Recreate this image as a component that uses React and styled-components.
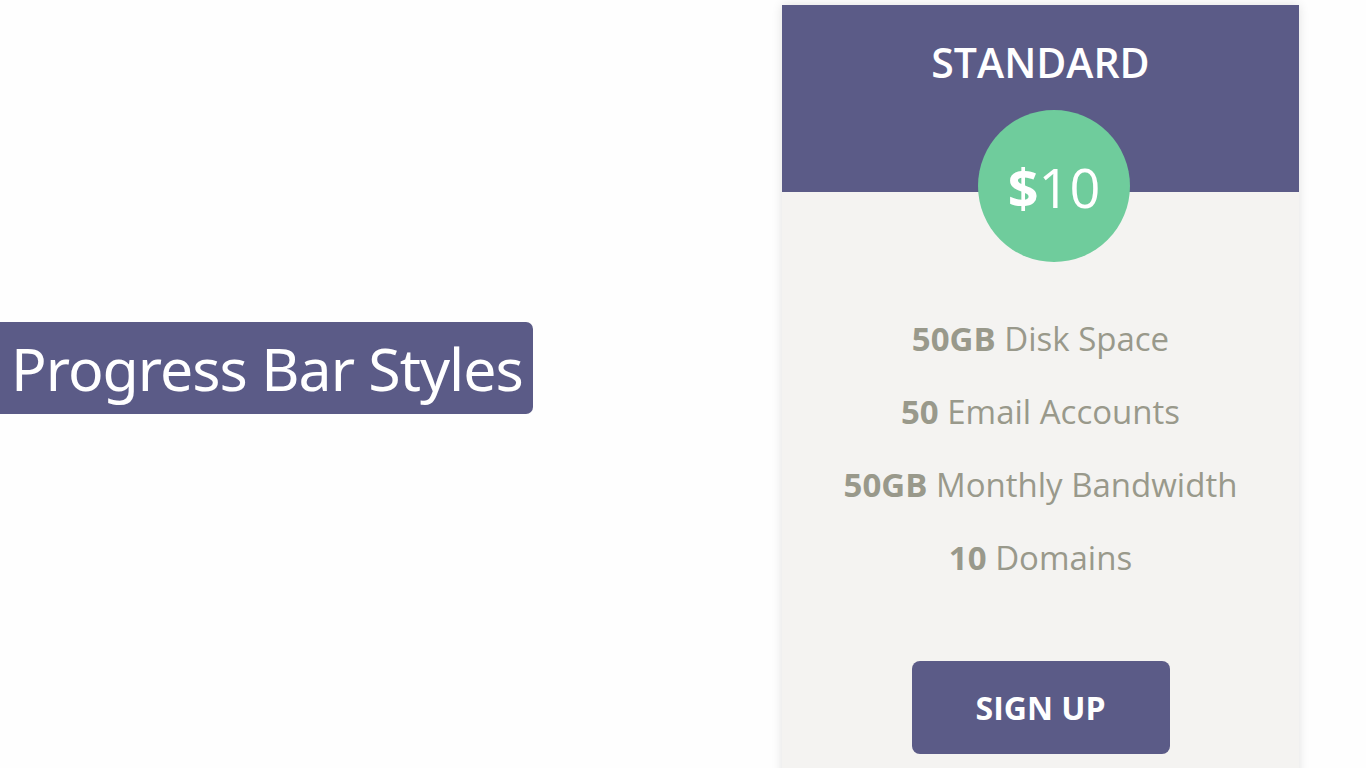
import React from 'react';
import styled, {createGlobalStyle} from 'styled-components';

const colors = {
  purple: '#5b5b87',
  green: '#6fcc9c',
  paper: '#f4f3f1',
  text: '#99998b',
};

const GlobalStyle = createGlobalStyle`
  html, body {
    margin: 0;
    padding: 0;
    background: #fefefe;
    overflow: hidden;
  }
  body {
    font-family: "Open Sans", "Noto Sans", sans-serif;
  }
`;

const Page = styled.div`
  display: flex;
  align-items: flex-start;
  height: 768px;
  overflow: hidden;
`;

const Label = styled.div`
  margin-top: 322px;
  width: 533px;
  height: 92px;
  box-sizing: border-box;
  padding-left: 11px;
  display: flex;
  align-items: center;
  background-color: ${colors.purple};
  border-radius: 0 7px 7px 0;
  color: #fff;
  font-family: "Noto Sans", "Open Sans", sans-serif;
  font-size: 59px;
  letter-spacing: -1px;
  white-space: nowrap;
`;

const Card = styled.div`
  margin: 5px 0 0 249px;
  width: 517px;
  height: 800px;
  background-color: ${colors.paper};
  box-shadow: 0 0 10px rgba(0, 0, 0, 0.12);
`;

const Header = styled.div`
  position: relative;
  height: 187px;
  background-color: ${colors.purple};
  display: flex;
  justify-content: center;
`;

const Title = styled.h2`
  margin: 30px 0 0;
  color: #fff;
  font-size: 41px;
  font-weight: 600;
  line-height: 54px;
`;

const Price = styled.div`
  position: absolute;
  left: 196px;
  top: 105px;
  width: 152px;
  height: 152px;
  border-radius: 50%;
  background-color: ${colors.green};
  color: #fff;
  display: flex;
  align-items: center;
  justify-content: center;
  font-size: 54px;
  padding-top: 2px;
  box-sizing: border-box;

  b {
    font-weight: 700;
  }
`;

const Features = styled.ul`
  list-style: none;
  margin: 0;
  padding: 125px 0 0;
  display: flex;
  flex-direction: column;
  align-items: center;
  gap: 29px;
`;

const Feature = styled.li`
  color: ${colors.text};
  font-size: 33px;
  line-height: 44px;

  b {
    font-weight: 700;
  }
`;

const ButtonRow = styled.div`
  display: flex;
  justify-content: center;
  margin-top: 81px;
`;

const Button = styled.a`
  width: 258px;
  height: 93px;
  display: flex;
  align-items: center;
  justify-content: center;
  background-color: ${colors.purple};
  border-radius: 8px;
  color: #fff;
  font-size: 32px;
  font-weight: 700;
  text-decoration: none;
`;

const features = [
  ['50GB', 'Disk Space'],
  ['50', 'Email Accounts'],
  ['50GB', 'Monthly Bandwidth'],
  ['10', 'Domains'],
];

const App = () => {
  return (
    <Page>
      <GlobalStyle/>
      <Label>Progress Bar Styles</Label>
      <Card>
        <Header>
          <Title>STANDARD</Title>
          <Price><b>$</b>10</Price>
        </Header>
        <Features>
          {features.map(([num, label]) => (
            <Feature key={label}><b>{num}</b> {label}</Feature>
          ))}
        </Features>
        <ButtonRow>
          <Button href="#">SIGN UP</Button>
        </ButtonRow>
      </Card>
    </Page>
  );
};

export default App;
